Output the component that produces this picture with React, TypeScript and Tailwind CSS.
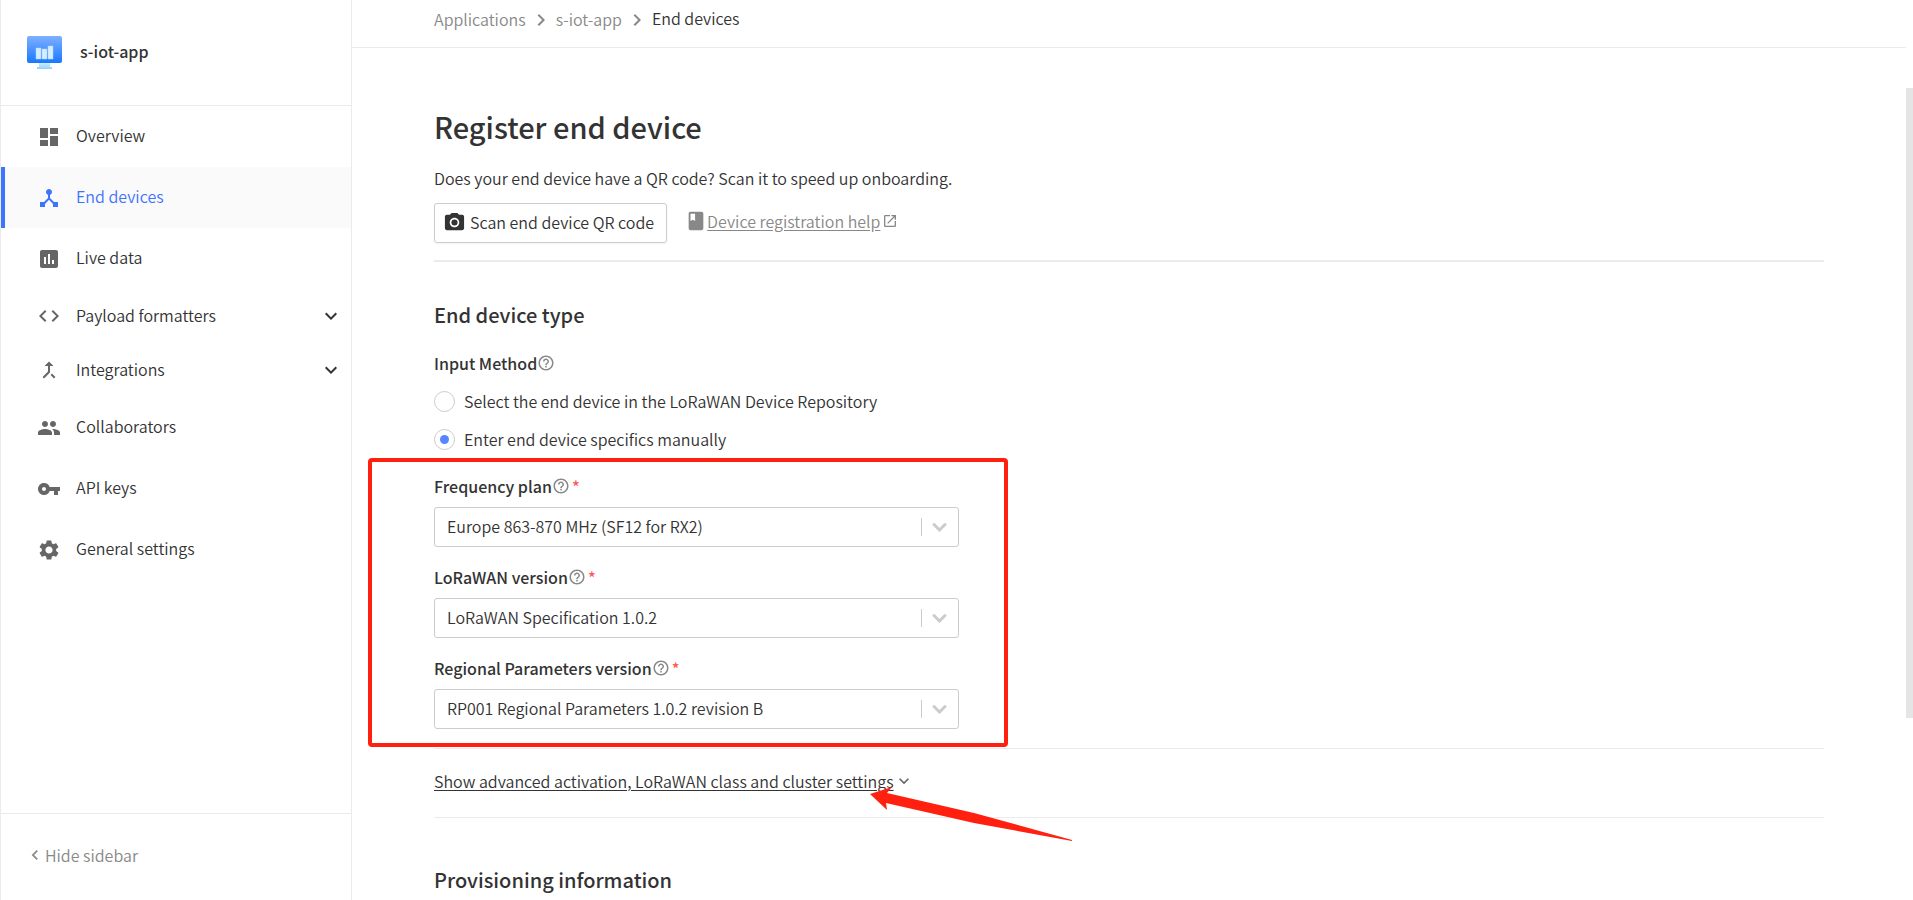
import { useState } from "react";
import type { ReactNode } from "react";
import type { IconType } from "react-icons";
import {
  MdBook,
  MdCode,
  MdDashboard,
  MdDeviceHub,
  MdExpandMore,
  MdGroup,
  MdHelpOutline,
  MdInsertChart,
  MdKeyboardArrowLeft,
  MdKeyboardArrowRight,
  MdMergeType,
  MdOpenInNew,
  MdPhotoCamera,
  MdSettings,
  MdVpnKey,
} from "react-icons/md";

type NavEntry = {
  label: string;
  icon: IconType;
  active?: boolean;
  expandable?: boolean;
};

const navEntries: NavEntry[] = [
  { label: "Overview", icon: MdDashboard },
  { label: "End devices", icon: MdDeviceHub, active: true },
  { label: "Live data", icon: MdInsertChart },
  { label: "Payload formatters", icon: MdCode, expandable: true },
  { label: "Integrations", icon: MdMergeType, expandable: true },
  { label: "Collaborators", icon: MdGroup },
  { label: "API keys", icon: MdVpnKey },
  { label: "General settings", icon: MdSettings },
];

const AppLogo = () => (
  <svg width="35" height="33" viewBox="0 0 35 33" aria-hidden="true">
    <defs>
      <linearGradient id="screen" x1="0" y1="0" x2="0" y2="1">
        <stop offset="0" stopColor="#7fb0ff" />
        <stop offset="1" stopColor="#1877ff" />
      </linearGradient>
      <linearGradient id="stand" x1="0" y1="0" x2="0" y2="1">
        <stop offset="0" stopColor="#d8f0ff" />
        <stop offset="1" stopColor="#8fd0ff" />
      </linearGradient>
    </defs>
    <path d="M12 26h11v5h2v2H10v-2h2z" fill="url(#stand)" />
    <rect width="35" height="27" rx="2" fill="url(#screen)" />
    <path
      d="M9 12h5v11H9zM15 13h5v10h-5zM21 10h5v13h-5z"
      fill="#d6ecff"
      stroke="#a9d4ff"
      strokeWidth="0.5"
    />
  </svg>
);

const NavItem = ({ label, icon: Icon, active, expandable }: NavEntry) => {
  if (expandable) {
    return (
      <button
        type="button"
        className="flex h-[54px] w-full items-center pr-2 pl-9 text-left"
      >
        <Icon size={24} className="text-[#666]" />
        <span className="ml-[15px] flex-1 pb-0.5">{label}</span>
        <MdExpandMore size={24} />
      </button>
    );
  }

  return (
    <a
      href="#"
      className={
        active
          ? "flex h-[61px] items-center border-l-4 border-[#3d74ff] bg-[#fafafa] pl-8 text-[#3d74ff]"
          : "flex h-[61px] items-center pl-9"
      }
    >
      <Icon size={24} className={active ? "" : "text-[#666]"} />
      <span className="ml-[15px] pb-1">{label}</span>
    </a>
  );
};

const Sidebar = () => (
  <aside className="flex w-[352px] shrink-0 flex-col border-x border-[#ebebeb]">
    <div className="flex h-[106px] items-center gap-[18px] border-b border-[#ebebeb] pl-[26px] font-medium">
      <AppLogo />
      <span className="pb-1">s-iot-app</span>
    </div>
    <nav className="flex-1">
      {navEntries.map((entry) => (
        <NavItem key={entry.label} {...entry} />
      ))}
    </nav>
    <button
      type="button"
      className="flex h-[87px] items-center border-t border-[#ebebeb] pb-1 pl-6 text-[#888]"
    >
      <MdKeyboardArrowLeft size={20} />
      <span>Hide sidebar</span>
    </button>
  </aside>
);

const Breadcrumbs = () => (
  <nav
    aria-label="Breadcrumb"
    className="flex h-12 shrink-0 items-center gap-[3px] border-b border-[#ebebeb] px-[82px] pb-2 text-[#888]"
  >
    <a href="#" className="pb-0.5">
      Applications
    </a>
    <MdKeyboardArrowRight size={24} />
    <a href="#" className="pb-0.5">
      s-iot-app
    </a>
    <MdKeyboardArrowRight size={24} />
    <span className="pb-1 text-[#333]">End devices</span>
  </nav>
);

const FieldLabel = ({
  htmlFor,
  children,
}: {
  htmlFor: string;
  children: ReactNode;
}) => (
  <div className="flex h-6 items-center">
    <label htmlFor={htmlFor} className="font-medium">
      {children}
    </label>
    <MdHelpOutline size={18} className="text-[#888]" />
    <span className="ml-0.5 font-medium text-[#ff5a5a]">*</span>
  </div>
);

const SelectField = ({
  id,
  label,
  value,
}: {
  id: string;
  label: string;
  value: string;
}) => (
  <div>
    <FieldLabel htmlFor={id}>{label}</FieldLabel>
    <div className="relative mt-[9px]">
      <select
        id={id}
        className="h-10 w-full appearance-none rounded-[3px] border border-[#ccc] bg-white pr-12 pb-0.5 pl-3"
      >
        <option>{value}</option>
      </select>
      <div className="pointer-events-none absolute inset-y-0 right-3 flex items-center gap-[10px]">
        <span className="h-[18px] w-px bg-[#ccc]" />
        <svg
          width="15"
          height="10"
          viewBox="0 0 15 10"
          fill="none"
          stroke="#ccc"
          strokeWidth="3"
          strokeLinecap="round"
          aria-hidden="true"
        >
          <path d="M2 2.5 L7.5 8 L13 2.5" />
        </svg>
      </div>
    </div>
  </div>
);

const RadioOption = ({
  label,
  checked,
  onChange,
}: {
  label: string;
  checked: boolean;
  onChange: () => void;
}) => (
  <label className="flex h-[22px] items-center gap-[9px]">
    <input
      type="radio"
      name="inputMethod"
      checked={checked}
      onChange={onChange}
      className="grid size-[21px] appearance-none place-items-center rounded-full border border-[#ccc] before:size-[9px] before:rounded-full checked:before:bg-[#5685ff]"
    />
    {label}
  </label>
);

const EndDeviceType = () => {
  const [method, setMethod] = useState("manual");

  return (
    <section>
      <h2 className="text-xl leading-7 font-medium">End device type</h2>
      <fieldset className="mt-[22px]">
        <legend className="flex h-6 items-center font-medium">
          Input Method
          <MdHelpOutline size={18} className="text-[#888]" />
        </legend>
        <div className="mt-[15px] flex flex-col gap-4">
          <RadioOption
            label="Select the end device in the LoRaWAN Device Repository"
            checked={method === "repository"}
            onChange={() => setMethod("repository")}
          />
          <RadioOption
            label="Enter end device specifics manually"
            checked={method === "manual"}
            onChange={() => setMethod("manual")}
          />
        </div>
      </fieldset>

      <div className="relative mt-6 flex w-[525px] flex-col gap-[18px]">
        <SelectField
          id="frequency-plan"
          label="Frequency plan"
          value="Europe 863-870 MHz (SF12 for RX2)"
        />
        <SelectField
          id="lorawan-version"
          label="LoRaWAN version"
          value="LoRaWAN Specification 1.0.2"
        />
        <SelectField
          id="regional-parameters"
          label="Regional Parameters version"
          value="RP001 Regional Parameters 1.0.2 revision B"
        />
        <div className="pointer-events-none absolute -top-4 -right-[49px] -bottom-[18px] -left-[66px] rounded border-4 border-[#ff2010]" />
      </div>
    </section>
  );
};

const AdvancedSettings = () => (
  <div className="relative mt-[19px] flex h-[70px] items-center border-y border-[#ebebeb]">
    <button type="button" className="flex items-center pb-1">
      <span className="underline underline-offset-2">
        Show advanced activation, LoRaWAN class and cluster settings
      </span>
      <MdExpandMore size={20} className="text-[#666]" />
    </button>
    <svg
      className="pointer-events-none absolute top-[36px] left-[435px]"
      width="205"
      height="56"
      viewBox="0 0 205 56"
      aria-hidden="true"
    >
      <path
        d="M1 9 L23 2 L18 8 L105 28 L203 55 L203 56 L105 38 L17 18 L18 25 Z"
        fill="#ff2010"
      />
    </svg>
  </div>
);

const App = () => {
  return (
    <div className="flex h-screen overflow-hidden bg-white font-['Noto_Sans_CJK_SC',sans-serif] text-base leading-6 font-[350] text-[#333]">
      <Sidebar />
      <div className="relative flex min-w-0 flex-1 flex-col">
        <div className="mr-[7px] flex min-h-0 flex-1 flex-col">
          <Breadcrumbs />
          <main className="flex-1 overflow-hidden px-[82px] pt-[58px]">
            <h1 className="text-[29px] leading-10 font-medium">
              Register end device
            </h1>
            <p className="mt-5">
              Does your end device have a QR code? Scan it to speed up
              onboarding.
            </p>
            <div className="mt-[13px] flex h-10 items-center gap-[18px]">
              <button
                type="button"
                className="flex h-10 items-center gap-1 rounded-[3px] border border-[#ccc] pr-3 pb-0.5 pl-2 shadow-xs"
              >
                <MdPhotoCamera size={23} />
                Scan end device QR code
              </button>
              <div className="flex items-center pb-1 text-[#888]">
                <MdBook size={22} />
                <a href="#" className="flex items-center gap-0.5">
                  <span className="underline underline-offset-2">
                    Device registration help
                  </span>
                  <MdOpenInNew size={16} />
                </a>
              </div>
            </div>
            <hr className="mt-[17px] mb-[39px] border-t-2 border-[#ebebeb]" />
            <EndDeviceType />
            <AdvancedSettings />
            <h2 className="mt-12 text-xl leading-7 font-medium">
              Provisioning information
            </h2>
          </main>
        </div>
        <div className="absolute top-[88px] right-0 h-[630px] w-[7px] bg-[#e5e5e5]" />
      </div>
    </div>
  );
};

export default App;
